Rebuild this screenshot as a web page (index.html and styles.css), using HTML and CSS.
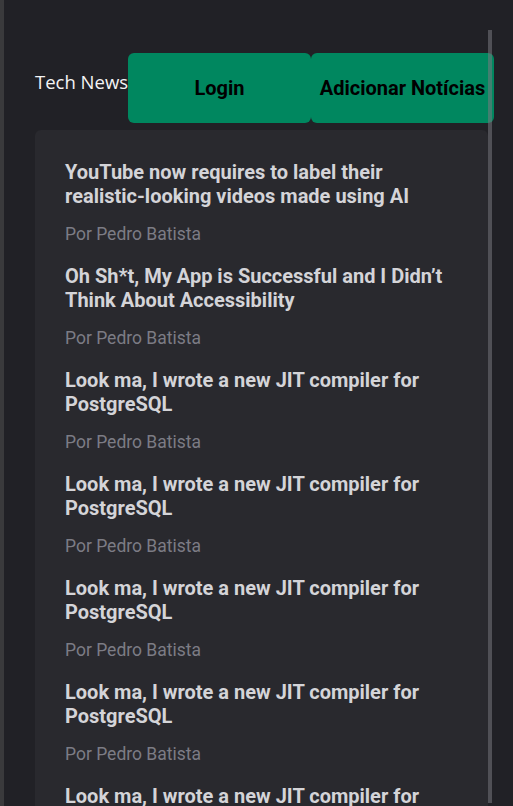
FILE: index.html
```html
<!DOCTYPE html>
<html lang="pt">
<head>
<meta charset="utf-8">
<title>Tech News</title>
<link rel="stylesheet" href="styles.css">
</head>
<body>
<div class="frame">
  <header class="topbar">
    <span class="brand">Tech News</span>
    <button class="btn">Login</button>
    <button class="btn">Adicionar Notícias</button>
  </header>
  <main class="card">
    <article class="item">
      <h2 class="title">YouTube now requires to label their realistic-looking videos made using AI</h2>
      <p class="author">Por Pedro Batista</p>
    </article>
    <article class="item">
      <h2 class="title">Oh Sh*t, My App is Successful and I Didn’t Think About Accessibility</h2>
      <p class="author">Por Pedro Batista</p>
    </article>
    <article class="item">
      <h2 class="title">Look ma, I wrote a new JIT compiler for PostgreSQL</h2>
      <p class="author">Por Pedro Batista</p>
    </article>
    <article class="item">
      <h2 class="title">Look ma, I wrote a new JIT compiler for PostgreSQL</h2>
      <p class="author">Por Pedro Batista</p>
    </article>
    <article class="item">
      <h2 class="title">Look ma, I wrote a new JIT compiler for PostgreSQL</h2>
      <p class="author">Por Pedro Batista</p>
    </article>
    <article class="item">
      <h2 class="title">Look ma, I wrote a new JIT compiler for PostgreSQL</h2>
      <p class="author">Por Pedro Batista</p>
    </article>
    <article class="item">
      <h2 class="title">Look ma, I wrote a new JIT compiler for PostgreSQL</h2>
      <p class="author">Por Pedro Batista</p>
    </article>
  </main>
  <div class="scrollbar"></div>
</div>
</body>
</html>
```
FILE: styles.css
```css
html, body {
  margin: 0;
  padding: 0;
  height: 100%;
  overflow: hidden;
  background: #212126;
}
.frame {
  position: relative;
  height: 806px;
  overflow: hidden;
  border-left: 4px solid #3a3a3c;
  box-sizing: border-box;
  padding: 53px 0 0 31px;
  font-family: Roboto, "Liberation Sans", sans-serif;
}
.topbar {
  display: flex;
  align-items: flex-start;
}
.brand {
  font-family: "Open Sans", "Noto Sans", sans-serif;
  font-size: 18.5px;
  color: #f4f4f5;
  line-height: 24px;
  padding-top: 17px;
  width: 93px;
  white-space: nowrap;
}
.btn {
  width: 183px;
  height: 70px;
  margin: 0;
  border: none;
  border-radius: 6px;
  background: #00875f;
  color: #000;
  font-family: Roboto, "Liberation Sans", sans-serif;
  font-weight: 700;
  font-size: 20px;
  padding: 0;
  white-space: nowrap;
}
.card {
  margin-top: 7px;
  width: 453px;
  background: #29292e;
  border-radius: 6px;
  padding: 30px 30px 0 30px;
  box-sizing: border-box;
}
.item {
  padding-bottom: 18px;
}
.title {
  margin: 0;
  font-size: 20px;
  line-height: 24px;
  font-weight: 700;
  color: #d4d4d8;
}
.author {
  margin: 14px 0 0;
  font-size: 17.5px;
  line-height: 24px;
  color: #7c7c85;
}
.scrollbar {
  position: absolute;
  left: 484px;
  top: 30px;
  width: 4px;
  height: 773px;
  background: rgba(120, 120, 125, 0.55);
}
```
